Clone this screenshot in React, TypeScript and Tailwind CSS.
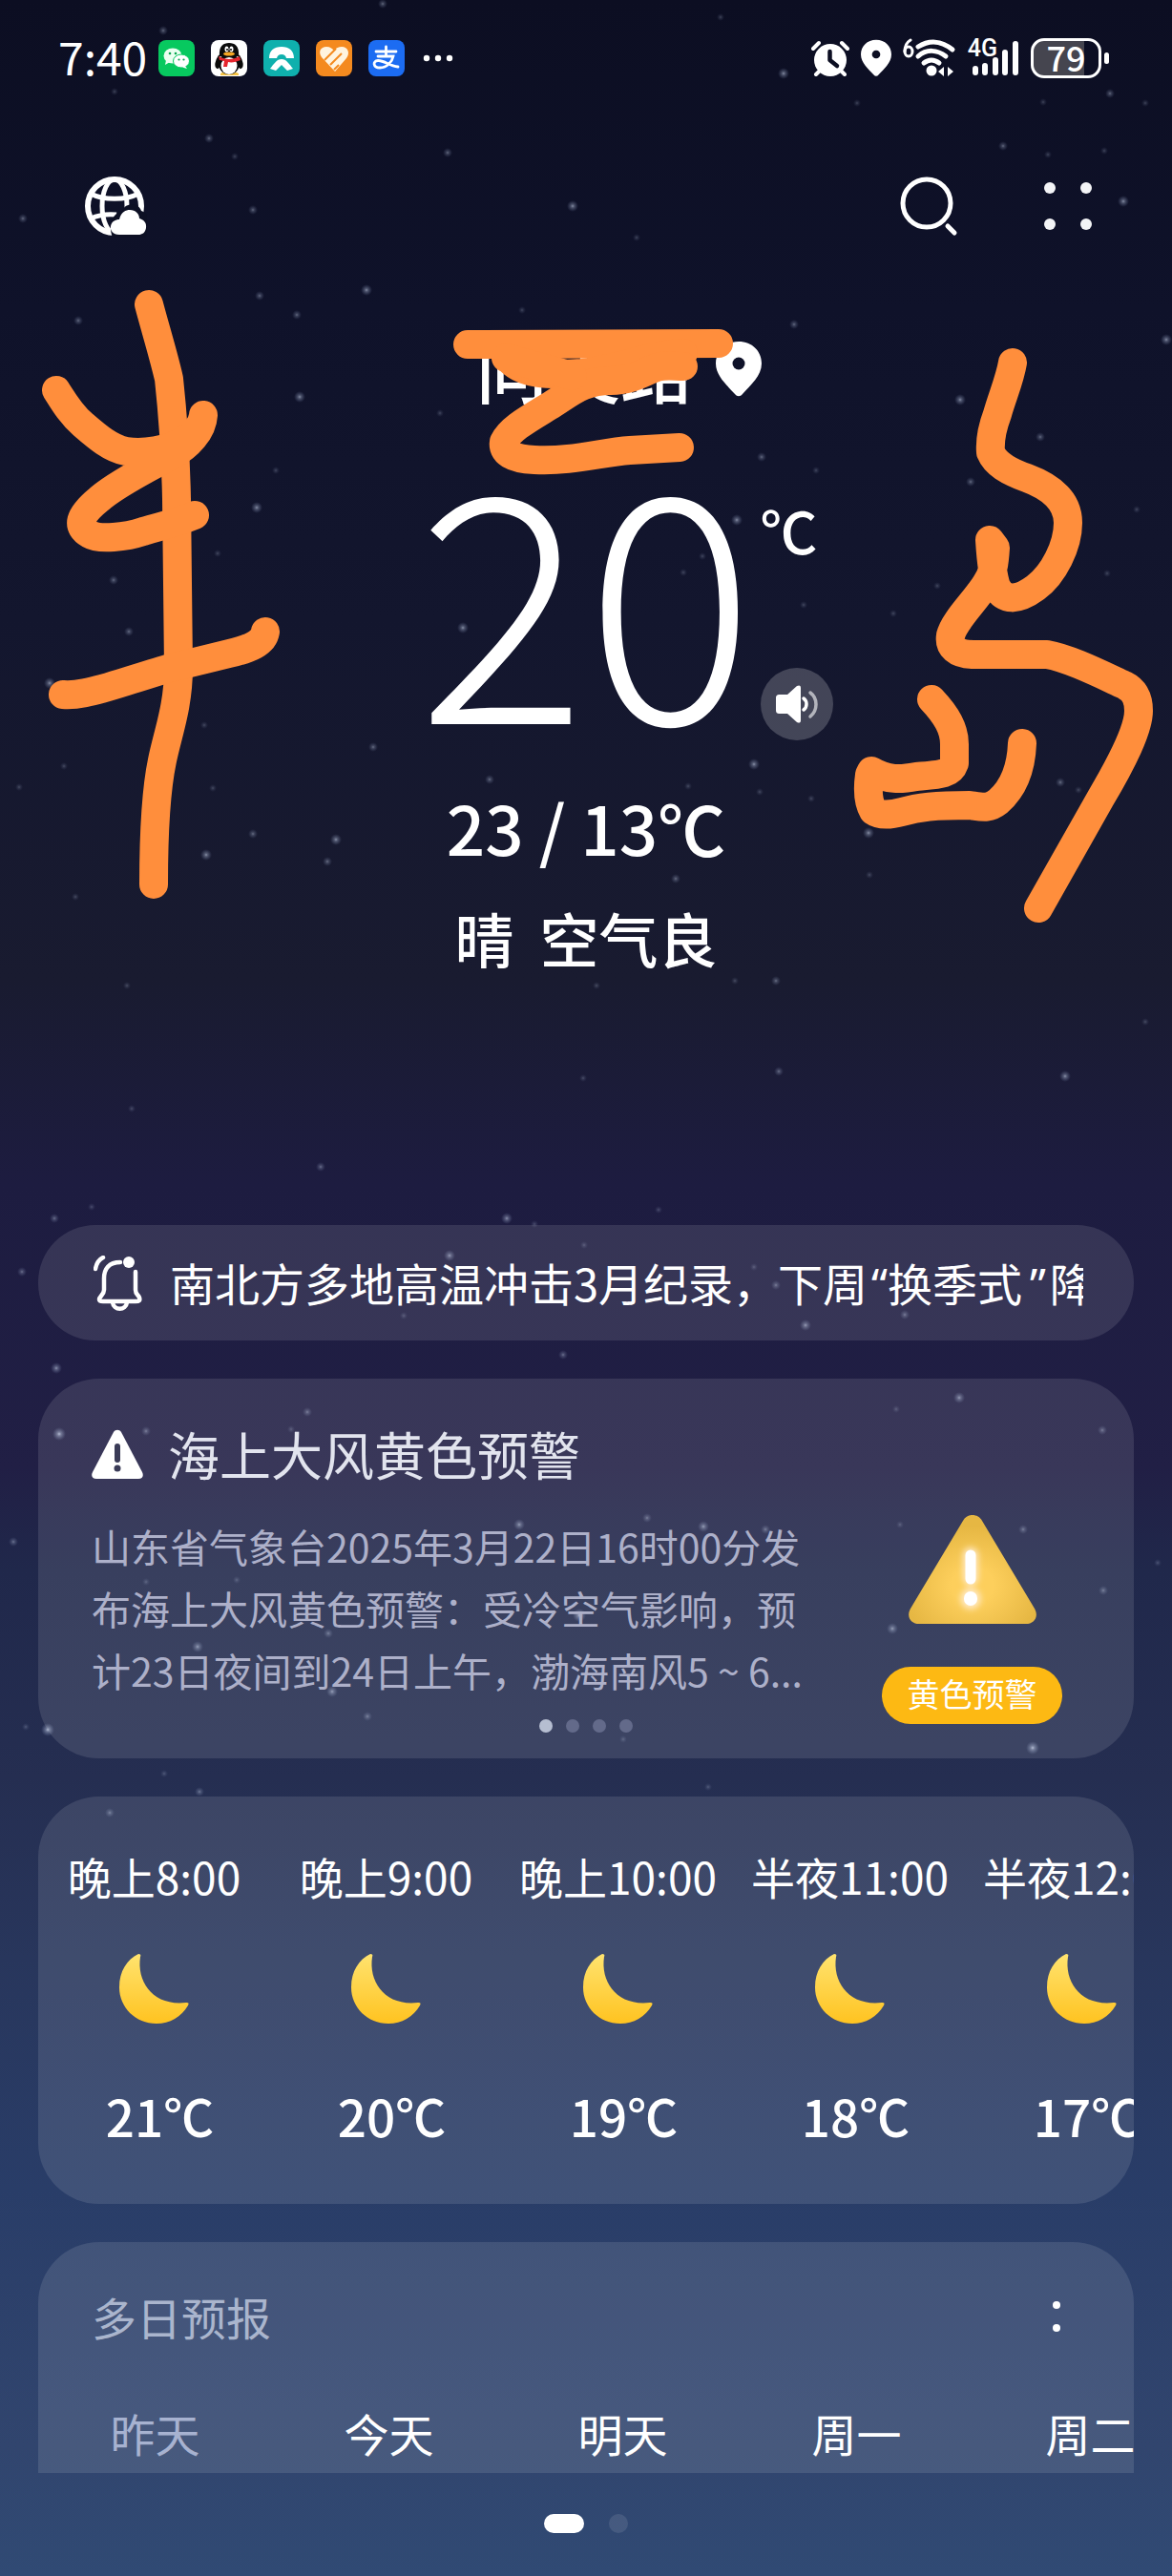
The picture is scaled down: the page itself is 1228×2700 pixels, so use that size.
import type { ReactNode } from "react";

const STARS: [number, number, number][] = [
  [401, 4, 2], [171, 32, 2], [755, 18, 1], [821, 77, 3], [1163, 98, 2], [898, 108, 1], [1093, 107, 1], [1200, 108, 1],
  [120, 96, 1], [219, 145, 2], [469, 160, 2], [246, 164, 1], [1051, 153, 2], [1098, 162, 1], [1157, 158, 1], [24, 229, 2],
  [265, 220, 2], [600, 216, 3], [667, 249, 1], [1177, 211, 3], [272, 310, 2], [384, 304, 3], [311, 330, 2], [547, 325, 1],
  [832, 340, 2], [82, 336, 2], [1222, 356, 3], [314, 416, 3], [461, 433, 1], [1006, 419, 3], [1090, 458, 2], [798, 479, 2],
  [855, 493, 1], [289, 493, 1], [1017, 505, 2], [269, 532, 3], [1191, 534, 1], [772, 545, 3], [736, 583, 1], [716, 600, 1],
  [228, 580, 1], [119, 608, 2], [1160, 601, 1], [982, 614, 1], [842, 634, 1], [936, 643, 1], [485, 658, 3], [135, 662, 2],
  [52, 716, 3], [214, 760, 1], [391, 783, 2], [67, 803, 1], [20, 825, 1], [223, 826, 1], [513, 817, 2], [790, 801, 3],
  [721, 824, 1], [796, 830, 1], [850, 837, 1], [1111, 820, 2], [1130, 828, 1], [265, 874, 2], [352, 880, 3], [343, 903, 2],
  [216, 896, 3], [910, 873, 3], [911, 917, 1], [708, 921, 2], [79, 940, 1], [625, 1033, 1], [813, 1028, 2], [770, 1028, 1],
  [133, 1033, 1], [1200, 1071, 1], [816, 1123, 2], [1116, 1128, 3], [611, 1130, 1], [138, 1162, 1], [336, 1223, 2],
  [57, 1277, 2], [96, 1265, 1], [531, 1277, 3], [560, 1283, 1], [690, 1268, 1], [471, 1316, 3], [612, 1305, 1], [23, 1333, 2],
  [790, 1328, 1], [813, 1347, 2], [948, 1378, 2], [844, 1389, 3], [423, 1379, 1], [590, 1420, 2], [59, 1434, 3], [1005, 1465, 3],
  [322, 1480, 2], [62, 1503, 4], [153, 1500, 2], [305, 1498, 1], [939, 1477, 1], [1155, 1499, 2], [678, 1591, 2], [737, 1600, 3],
  [802, 1603, 2], [544, 1598, 3], [943, 1598, 1], [1072, 1603, 2], [14, 1616, 2], [153, 1658, 1], [248, 1656, 1], [1213, 1638, 1],
  [1156, 1667, 2], [607, 1693, 4], [935, 1707, 3], [344, 1712, 2], [207, 1726, 3], [348, 1773, 3], [385, 1799, 2], [50, 1813, 4],
  [27, 1810, 1], [653, 1823, 1], [1082, 1832, 4], [172, 1859, 1], [209, 1878, 2], [115, 1900, 2], [742, 1873, 1],
];

const HOURS = [
  { time: "晚上8:00", temp: "21℃" },
  { time: "晚上9:00", temp: "20℃" },
  { time: "晚上10:00", temp: "19℃" },
  { time: "半夜11:00", temp: "18℃" },
  { time: "半夜12:00", temp: "17℃" },
];

const DAYS = ["昨天", "今天", "明天", "周一", "周二"];

function StarField() {
  return (
    <svg
      className="pointer-events-none absolute inset-0 h-full w-full"
      viewBox="0 0 1228 2700"
      preserveAspectRatio="xMidYMin slice"
      aria-hidden="true"
    >
      <defs>
        <radialGradient id="star">
          <stop offset="0" stopColor="#d5e0f5" stopOpacity="1" />
          <stop offset="0.3" stopColor="#b4c0dc" stopOpacity="0.6" />
          <stop offset="1" stopColor="#8090b8" stopOpacity="0" />
        </radialGradient>
      </defs>
      {STARS.map(([x, y, s]) => (
        <circle key={`${x}-${y}`} cx={x} cy={y} r={3 + s} fill="url(#star)" opacity={0.1 + s * 0.17} />
      ))}
    </svg>
  );
}

function Doodle() {
  return (
    <svg
      className="pointer-events-none absolute inset-x-0 top-0 w-full"
      viewBox="0 0 1228 1000"
      fill="none"
      stroke="#ff8e3c"
      strokeWidth="30"
      strokeLinecap="round"
      strokeLinejoin="round"
      aria-hidden="true"
    >
      <path d="M156 319C162 342 171 371 177 397C180 425 184 472 185 523L187 700C187 740 176 768 170 797C163 830 161 870 161 927" />
      <path d="M59 409C66 420 74 434 87 445C102 458 116 470 132 473C150 476 176 472 192 462C203 455 212 446 213 435C212 452 197 468 180 477C160 488 122 507 104 523C82 541 80 552 94 560C104 566 132 563 150 557C167 552 190 546 204 540" />
      <path d="M66 728C78 729 92 727 133 714C160 706 176 700 187 698L240 685C262 680 276 674 278 662" />
      <path d="M490 361L753 360" />
      <path d="M533 376C545 392 575 394 610 391C650 386 690 370 716 370" />
      <path d="M716 384C706 384 698 382 688 385C672 391 662 399 640 399C610 399 598 412 575 426C552 440 534 450 528 463C526 474 536 481 560 482C600 484 630 474 660 472L712 469" />
      <path d="M530 375L600 394" />
      <path d="M1061 380C1058 398 1050 416 1045 434C1039 450 1037 462 1038 474C1043 486 1056 494 1076 501C1100 510 1119 524 1119 548C1119 572 1104 602 1085 616C1066 630 1052 630 1044 615C1039 600 1038 582 1037 566L1043 574C1042 590 1041 600 1033 612C1022 630 1000 650 996 666C994 678 1002 686 1020 686L1097 686C1120 690 1152 706 1178 718C1190 724 1193 734 1193 745C1193 764 1176 798 1153 837L1088 952" />
      <path d="M976 733C992 750 1000 764 1000 780L1000 800C996 812 984 812 960 814C944 817 930 818 913 808L911 812C909 826 909 840 915 850C922 855 934 854 945 851C962 846 980 844 1016 844C1030 846 1036 848 1046 840C1062 826 1070 806 1071 779" />
    </svg>
  );
}

function AppBadge({ label, tone, children }: { label: string; tone: string; children: ReactNode }) {
  return (
    <svg viewBox="0 0 38 38" className={`h-[38px] w-[38px] rounded-lg ${tone}`} role="img" aria-label={label}>
      {children}
    </svg>
  );
}

function StatusBar() {
  return (
    <div className="flex h-[122px] items-center justify-between pl-[61px] pr-[66px]">
      <div className="flex items-center gap-[17px]">
        <time className="-mr-1 w-[92px] pb-1.5 text-[48px] leading-none">7:40</time>
        <AppBadge label="WeChat" tone="bg-[#07c95f]">
          <ellipse cx="15" cy="16.500" rx="9.500" ry="8" fill="#eafff1" />
          <path d="M8 21l-1 5 5-3z" fill="#eafff1" />
          <circle cx="12" cy="14" r="1.300" fill="#07a54e" />
          <circle cx="18" cy="14" r="1.300" fill="#07a54e" />
          <ellipse cx="24" cy="22" rx="8.500" ry="7" fill="#fff" stroke="#07c95f" strokeWidth="1" />
          <path d="M28 27l2 3-5-1.500z" fill="#fff" />
          <circle cx="21.500" cy="20.500" r="1.100" fill="#07a54e" />
          <circle cx="26.500" cy="20.500" r="1.100" fill="#07a54e" />
        </AppBadge>
        <AppBadge label="QQ" tone="bg-white">
          <path d="M10 35c4-3 14-3 19 0v2H10z" fill="#f6c445" />
          <path d="M9 16C5 22 4 28 7 29L11 25M29 16c4 6 5 12 2 13l-4-4" fill="#0b0b0b" stroke="#0b0b0b" strokeWidth="2" />
          <ellipse cx="19" cy="25" rx="11" ry="11" fill="#0b0b0b" />
          <ellipse cx="19" cy="27" rx="8.500" ry="9" fill="#fff" />
          <path d="M9 17C8 6 13 3 19 3s11 3 10 14z" fill="#0b0b0b" />
          <ellipse cx="16.500" cy="9.500" rx="2" ry="3" fill="#fff" />
          <ellipse cx="21.500" cy="9.500" rx="2" ry="3" fill="#fff" />
          <circle cx="17" cy="10" r="1" fill="#000" />
          <circle cx="21" cy="10" r="1" fill="#000" />
          <ellipse cx="19" cy="14.500" rx="6" ry="2" fill="#f5a623" />
          <path d="M8 17c7 4 15 4 22 0l1 4c-5 2-9 3-13 2l-1 5h-4l1-6-5-1z" fill="#e5252d" />
        </AppBadge>
        <AppBadge label="NIO" tone="bg-[#0fb0ad]">
          <path d="M6 19C6 11 11 7 19 7s13 4 13 12H24c-1-3-2-4-5-4s-4 1-5 4z" fill="#fff" />
          <path d="M19 20c5 0 8 5 12 10l-6 2-6-6-6 6-6-2c4-5 7-10 12-10z" fill="#fff" />
        </AppBadge>
        <AppBadge label="Health" tone="bg-[#f48a1f]">
          <path d="M20 33L6 18C2 12 5 7 11 7C15 7 17 9 19 11C21 8 24 7 27 7C34 7 36 14 32 19Z" fill="#fff4df" />
          <path d="M9 21L21 9M15 26L27 14M19 31L24 26" stroke="#f48a1f" strokeWidth="2" fill="none" />
        </AppBadge>
        <AppBadge label="Alipay" tone="bg-[#1c6cf2]">
          <g fill="none" stroke="#fff" strokeWidth="2.800" strokeLinecap="round">
            <path d="M8 12H29M18.500 7V17M10 17H26C25 22 20 29 12 29C5 29 4 22 10 21.500C16 21 22 27 31 28" />
          </g>
        </AppBadge>
        <svg viewBox="0 0 38 38" className="h-[38px] w-[38px]" fill="#fff" aria-hidden="true">
          <circle cx="6" cy="19" r="3.200" />
          <circle cx="18" cy="19" r="3.200" />
          <circle cx="30" cy="19" r="3.200" />
        </svg>
      </div>

      <div className="flex items-center gap-3">
        <svg viewBox="0 0 40 38" className="h-[38px] w-[40px]" aria-label="Alarm" role="img">
          <circle cx="20" cy="21" r="17" fill="#fff" />
          <path d="M2 9L8 3M38 9L32 3M5 36L9 32M35 36L31 32" stroke="#fff" strokeWidth="4" strokeLinecap="round" />
          <path d="M19.500 12V21L27 27" stroke="#0c0e22" strokeWidth="4.500" fill="none" strokeLinecap="round" strokeLinejoin="round" />
        </svg>
        <PinIcon className="h-[40px] w-[32px]" hole="#0c0e22" />
        <svg viewBox="0 0 56 42" className="h-[42px] w-[56px]" fill="none" stroke="#fff" strokeLinecap="round" aria-label="Wi-Fi 6" role="img">
          <path d="M8 2C3 5 2 9 2 14" strokeWidth="3" />
          <ellipse cx="6" cy="14" rx="4" ry="5" strokeWidth="3" />
          <path d="M16 9C27 2 40 2 52 12" strokeWidth="5" />
          <path d="M16 19C25 11 36 12 45 19" strokeWidth="5" />
          <path d="M22 26C27 22 33 22 38 26" strokeWidth="5" />
          <circle cx="30" cy="34" r="5.500" fill="#fff" stroke="none" />
          <path d="M37 35L43 30V40ZM53 35L47 30V40Z" fill="#fff" stroke="none" />
        </svg>
        <div className="flex items-start">
          <span className="-mr-[27px] font-['Roboto',sans-serif] text-[25px] font-medium leading-5">4G</span>
          <svg viewBox="0 0 50 40" className="h-[40px] w-[50px]" stroke="#fff" strokeWidth="6" strokeLinecap="round" aria-label="Signal" role="img">
            <path d="M4 31V35M14 28V35M25 22V35M35 14V35M46 5V35" />
          </svg>
        </div>
        <div className="flex items-center gap-[3px]">
          <div className="flex h-[42px] w-[74px] items-center justify-center rounded-[14px] border-[3px] border-white bg-linear-to-r from-[#45454f] from-78% to-transparent to-78% pb-1">
            <span className="text-[36px] font-medium leading-none">79</span>
          </div>
          <span className="h-3 w-[5px] rounded-full bg-white" />
        </div>
      </div>
    </div>
  );
}

function PinIcon({ className, hole }: { className: string; hole: string }) {
  return (
    <svg viewBox="0 0 48 58" className={className} aria-hidden="true">
      <path d="M24 0C10 0 0 10 0 23C0 36 12 46 20 55C22.500 58 25.500 58 28 55C36 46 48 36 48 23C48 10 38 0 24 0Z" fill="#fff" />
      <circle cx="24" cy="23" r="6.500" fill={hole} />
    </svg>
  );
}

function TopBar() {
  return (
    <header className="flex h-[188px] items-center justify-between pl-[88px] pr-[76px]">
      <button type="button" aria-label="Cities" className="cursor-pointer">
        <svg viewBox="0 0 66 66" className="h-[66px] w-[66px]" fill="none" stroke="#fff" strokeWidth="6">
          <circle cx="32" cy="33" r="28" />
          <ellipse cx="32" cy="33" rx="13" ry="28" strokeWidth="5" />
          <path d="M7 20C20 27 44 27 57 20M7 46C16 42 24 41 34 42" strokeWidth="5" />
          <path d="M30 66C24 50 32 40 40 38C44 28 58 30 60 38C72 42 70 60 64 66Z" fill="#0d1024" stroke="none" />
          <path d="M37 63C30 63 27 58 28 54C29 49 33 47 37 47C39 39 44 37 48 37C54 37 58 41 58 46C62 47 66 50 65 56C64 61 61 63 57 63Z" fill="#fff" stroke="none" />
        </svg>
      </button>
      <div className="flex items-center gap-[80px]">
        <button type="button" aria-label="Search" className="cursor-pointer">
          <svg viewBox="0 0 64 64" className="h-16 w-16" fill="none" stroke="#fff" strokeWidth="5" strokeLinecap="round">
            <circle cx="29" cy="29" r="25" />
            <path d="M51 53L58 60" />
          </svg>
        </button>
        <button type="button" aria-label="More" className="grid cursor-pointer grid-cols-2 gap-[26px] p-2">
          <span className="h-3 w-3 rounded-full bg-gray-100" />
          <span className="h-3 w-3 rounded-full bg-gray-100" />
          <span className="h-3 w-3 rounded-full bg-gray-100" />
          <span className="h-3 w-3 rounded-full bg-gray-100" />
        </button>
      </div>
    </header>
  );
}

function Current() {
  return (
    <section className="flex flex-col items-center pb-[265px] pt-8">
      <h1 className="flex items-center gap-6 pl-[68px]">
        <span className="pb-1.5 text-[76px] font-medium leading-[84px]">向英路</span>
        <PinIcon className="h-[58px] w-[48px]" hole="#0f1229" />
      </h1>
      <div className="mt-14 grid h-[288px] w-full grid-cols-[1fr_auto_1fr]">
        <span />
        <p className="text-[330px] font-light leading-[254px]">20</p>
        <div className="flex flex-col items-start justify-between pl-1.5 pt-[31px]">
          <span className="text-[60px] font-medium leading-[72px]">℃</span>
          <button type="button" aria-label="Read aloud" className="flex h-[76px] w-[76px] cursor-pointer items-center justify-center rounded-full bg-white/20">
            <svg viewBox="0 0 44 40" className="h-10 w-11" aria-hidden="true">
              <path d="M4 10H12L22 1C24 0 26 0 26 3V37C26 40 24 40 22 39L12 30H4C1 30 0 29 0 26V14C0 11 1 10 4 10Z" fill="#fff" />
              <path d="M29 14C33 17 33 23 29 26" stroke="#fff" strokeWidth="3.500" fill="none" strokeLinecap="round" />
              <path d="M36 8C44 14 44 26 36 33" stroke="#fff" strokeOpacity="0.600" strokeWidth="3.500" fill="none" strokeLinecap="round" />
            </svg>
          </button>
        </div>
      </div>
      <p className="mt-12 text-[71px] font-medium leading-[84px]">23 / 13℃</p>
      <p className="mt-[39px] flex gap-[27px] text-[62px] font-medium leading-[72px]">
        <span>晴</span>
        <span>空气良</span>
      </p>
    </section>
  );
}

function NewsCard() {
  return (
    <a href="#news" className="flex h-[121px] items-center gap-7 rounded-[60px] bg-white/11 pl-[58px] pr-[53px]">
      <svg viewBox="0 0 52 58" className="h-[58px] w-[52px] shrink-0" fill="none" stroke="#fff" strokeWidth="4.500" strokeLinecap="round" strokeLinejoin="round" aria-hidden="true">
        <path d="M28 7C16 7 11 14 11 24V36C11 41 6 43 6 46C6 48 8 48 10 48H44C48 48 49 47 48 44C47 41 44 41 44 36V17" />
        <path d="M20 49C21 58 34 58 35 49" />
        <path d="M2 14C3 8 6 4 10 2" />
        <circle cx="37" cy="7" r="6" fill="#fff" stroke="none" />
      </svg>
      <span className="overflow-hidden whitespace-nowrap text-[47px] leading-[64px]">
        南北方多地高温冲击3月纪录，下周<span className="pl-1 font-['Noto_Sans',sans-serif]">“</span>换季式
        <span className="pl-2 pr-1 font-['Noto_Sans',sans-serif]">”</span>降温来袭
      </span>
    </a>
  );
}

function AlertCard() {
  return (
    <section className="relative rounded-[64px] bg-white/11 pb-9 pl-14 pr-[75px] pt-[43px]">
      <h2 className="flex items-center gap-[26px] text-[54px] leading-[72px] text-[#e2e4ee]">
        <svg viewBox="0 0 54 52" className="h-[52px] w-[54px]" aria-hidden="true">
          <path d="M23 3C25 0 29 0 31 3L53 45C55 49 53 52 49 52H5C1 52-1 49 1 45Z" fill="#fff" />
          <path d="M27 18V32" stroke="#3a3b57" strokeWidth="6" strokeLinecap="round" />
          <circle cx="27" cy="41" r="3.500" fill="#3a3b57" />
        </svg>
        海上大风黄色预警
      </h2>
      <div className="mt-7 flex items-start justify-between">
        <p className="whitespace-nowrap text-[41px] leading-[65px] text-[#adb0c9]">
          山东省气象台2025年3月22日16时00分发
          <br />
          布海上大风黄色预警：受冷空气影响，预
          <br />
          计23日夜间到24日上午，渤海南风5 ~ 6...
        </p>
        <div className="flex flex-col items-center gap-[45px]">
          <svg viewBox="0 0 134 114" className="h-[114px] w-[134px]" aria-hidden="true">
            <defs>
              <radialGradient id="warn" cx="0.5" cy="0.65" r="0.55">
                <stop offset="0.3" stopColor="#fdcf5c" />
                <stop offset="1" stopColor="#e6b743" />
              </radialGradient>
              <filter id="glow" x="0" y="0" width="134" height="114" filterUnits="userSpaceOnUse">
                <feGaussianBlur stdDeviation="3" />
              </filter>
            </defs>
            <path d="M57 6C61-2 73-2 77 6L132 98C137 107 131 114 123 114H11C3 114-3 107 2 98Z" fill="url(#warn)" />
            <g stroke="#ffe9c4" strokeLinecap="round" filter="url(#glow)">
              <path d="M65 42V66" strokeWidth="16" />
              <path d="M65 87V88" strokeWidth="21" />
            </g>
            <g stroke="#fff" strokeLinecap="round">
              <path d="M65 42V67" strokeWidth="11" />
              <path d="M65 87V88" strokeWidth="14" />
            </g>
          </svg>
          <span className="flex h-[60px] w-[189px] items-center justify-center rounded-full bg-[#fdb913] pb-1 text-[34px] leading-none text-white">
            黄色预警
          </span>
        </div>
      </div>
      <div className="absolute inset-x-0 bottom-[27px] flex justify-center gap-[14px]">
        <span className="h-[14px] w-[14px] rounded-full bg-[#b6bed1]" />
        <span className="h-[14px] w-[14px] rounded-full bg-[#636a8a]" />
        <span className="h-[14px] w-[14px] rounded-full bg-[#636a8a]" />
        <span className="h-[14px] w-[14px] rounded-full bg-[#636a8a]" />
      </div>
    </section>
  );
}

function Moon() {
  return (
    <svg viewBox="0 0 73 73" className="h-[73px] w-[73px]" aria-hidden="true">
      <defs>
        <linearGradient id="moon" x1="0" y1="0" x2="0" y2="1">
          <stop offset="0" stopColor="#ffe36f" />
          <stop offset="1" stopColor="#ffc320" />
        </linearGradient>
      </defs>
      <path
        d="M20 0C22 0 23 1 22 3C18 30 36 55 70 51C73 51 73 52 72 54C65 66 53 73 39 73C17 73 0 56 0 35C0 18 8 6 20 0Z"
        fill="url(#moon)"
      />
    </svg>
  );
}

function HourlyCard() {
  return (
    <section className="overflow-hidden rounded-[64px] bg-white/11 pb-[63px] pt-[53px]">
      <ul className="flex">
        {HOURS.map((h) => (
          <li key={h.time} className="flex w-[243px] shrink-0 flex-col items-center">
            <span className="whitespace-nowrap text-[46px] leading-[60px]">{h.time}</span>
            <span className="mt-[52px]">
              <Moon />
            </span>
            <span className="mt-[66px] pl-3 text-[53px] font-medium leading-[60px]">{h.temp}</span>
          </li>
        ))}
      </ul>
    </section>
  );
}

function DailyCard() {
  return (
    <section className="overflow-hidden rounded-t-[64px] bg-white/11 pb-3 pt-12">
      <div className="flex items-center justify-between pl-14 pr-[67px]">
        <h2 className="text-[47px] leading-[60px] text-[#aab5cd]">多日预报</h2>
        <button type="button" aria-label="Forecast options" className="flex cursor-pointer flex-col gap-4 p-2.5">
          <span className="h-2 w-2 rounded-full bg-white" />
          <span className="h-2 w-2 rounded-full bg-white" />
        </button>
      </div>
      <ul className="mt-[62px] flex">
        {DAYS.map((d, i) => (
          <li key={d} className={`w-[245px] shrink-0 text-center text-[47px] leading-[60px] ${i === 0 ? "text-[#a7b2d0]" : ""}`}>
            {d}
          </li>
        ))}
      </ul>
    </section>
  );
}

export default function App() {
  return (
    <div className="relative min-h-screen overflow-hidden bg-[linear-gradient(180deg,#0c0e22_0%,#0f122a_12%,#13162e_24%,#191b30_38%,#1d1c40_46%,#211f45_57%,#20284b_61%,#252e51_69%,#28365c_76%,#293d68_85%,#31456e_95%,#304a74_100%)] font-['Noto_Sans_CJK_SC',sans-serif] text-white">
      <StarField />
      <div className="relative">
        <StatusBar />
        <TopBar />
        <Current />
        <main className="flex flex-col gap-10 px-10">
          <NewsCard />
          <AlertCard />
          <HourlyCard />
          <DailyCard />
        </main>
        <nav aria-label="Pages" className="flex justify-center gap-[26px] py-[43px]">
          <span className="h-5 w-[42px] rounded-full bg-white" />
          <span className="h-5 w-5 rounded-full bg-white/10" />
        </nav>
      </div>
      <Doodle />
    </div>
  );
}
